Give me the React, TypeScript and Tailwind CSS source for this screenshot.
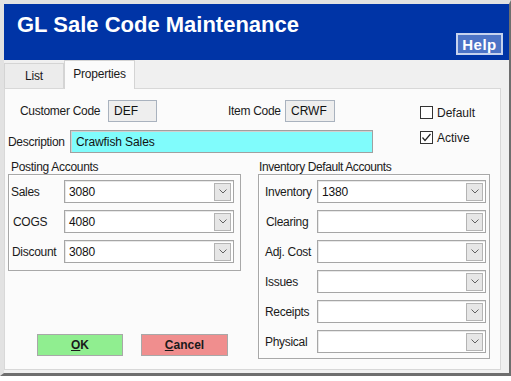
import React from "react";

const font = { fontFamily: '"Liberation Sans", Arial, sans-serif' };

function Chevron() {
  return (
    <svg width="8" height="5" viewBox="0 0 8 5">
      <polyline points="0.5,0.5 4,4 7.5,0.5" fill="none" stroke="#606060" strokeWidth="1" />
    </svg>
  );
}

function Combo({ value, w }: { value: string; w: string }) {
  return (
    <div className={`${w} h-[23px] border border-[#a6a6a6] bg-white flex items-center shadow-[inset_1px_1px_0_#e8e8e8]`}>
      <span className="flex-1 pl-[4px] text-[12px] tracking-[-0.2px] text-[#111]">{value}</span>
      <div className="w-[17px] h-[18px] mr-[2px] border border-[#b4b4b4] bg-[#e6e6e6] flex items-center justify-center">
        <Chevron />
      </div>
    </div>
  );
}

function Row({ label, value, lw, cw }: { label: string; value: string; lw: string; cw: string }) {
  return (
    <div className="flex items-center h-[23px]">
      <span className={`${lw} text-[12px] tracking-[-0.3px] text-[#1a1a1a]`}>{label}</span>
      <Combo value={value} w={cw} />
    </div>
  );
}

export default function App() {
  return (
    <div className="w-[511px] h-[381px] bg-white" style={font}>
      <div className="w-[511px] h-[376px] border-t-[4px] border-l-[4px] border-[#e2e2e2] border-r-[2px] border-r-[#6e6e6e] border-b-[3px] border-b-[#6e6e6e] bg-[#f0f0f0]">
        {/* Header */}
        <div className="h-[56px] bg-[#0034a6] relative flex">
          <div className="pl-[13px] pt-[10px] text-white font-bold text-[22px] leading-[22px]">
            GL Sale Code Maintenance
          </div>
          <div className="ml-auto mt-[29px] mr-[6px] w-[47px] h-[22px] border-2 border-[#c6d2ee] bg-[#4c73c6] flex items-center justify-center text-white font-bold text-[15px] tracking-[0.5px] leading-none">
            Help
          </div>
        </div>
        {/* Tabs */}
        <div className="h-[28px] flex items-end">
          <div className="w-[60px] h-[25px] bg-[#ececec] border border-b-0 border-[#d4d4d4] flex items-center justify-center text-[12px] tracking-[-0.2px] text-[#1a1a1a]">
            List
          </div>
          <div className="relative z-10 -mb-px w-[71px] h-[29px] bg-[#fbfbfb] border border-b-0 border-[#d4d4d4] flex items-center justify-center pb-[3px] text-[12px] tracking-[-0.2px] text-[#1a1a1a]">
            Properties
          </div>
        </div>
        {/* Panel */}
        <div className="w-[497px] h-[282px] border border-[#d8d8d8] bg-[#fbfbfb]">
          <div className="flex">
            <div className="w-[415px] flex flex-col">
              <div className="flex items-center h-[22px] mt-[11px]">
                <span className="ml-[15px] w-[88px] text-[12px] tracking-[-0.3px] text-[#1a1a1a]">Customer Code</span>
                <div className="w-[49px] h-[22px] border border-[#a9b2be] bg-[#eeeeee] flex items-center pl-[5px] text-[12px] text-[#111]">DEF</div>
                <span className="ml-[71px] w-[57px] text-[12px] tracking-[-0.3px] text-[#1a1a1a]">Item Code</span>
                <div className="w-[50px] h-[22px] border border-[#a9b2be] bg-[#eeeeee] flex items-center pl-[5px] text-[12px] text-[#111]">CRWF</div>
              </div>
              <div className="flex items-center h-[23px] mt-[8px]">
                <span className="ml-[3px] w-[62px] text-[12px] tracking-[-0.3px] text-[#1a1a1a]">Description</span>
                <div className="w-[303px] h-[23px] border border-[#a0a0a0] bg-[#80fcfc] flex items-center pl-[5px] text-[12px] tracking-[-0.1px] text-[#111] shadow-[inset_1px_1px_0_#d0d0d0]">
                  Crawfish Sales
                </div>
              </div>
            </div>
            <div className="flex flex-col mt-[17px] gap-[12px]">
              <div className="flex items-center h-[13px]">
                <div className="w-[13px] h-[13px] border border-[#333] bg-white" />
                <span className="ml-[4px] text-[12px] text-[#1a1a1a]">Default</span>
              </div>
              <div className="flex items-center h-[13px]">
                <div className="w-[13px] h-[13px] border border-[#333] bg-white flex items-center justify-center">
                  <svg width="11" height="11" viewBox="0 0 11 11">
                    <polyline points="1.5,5.5 4,8.5 9.5,2" fill="none" stroke="#222" strokeWidth="1.2" />
                  </svg>
                </div>
                <span className="ml-[4px] text-[12px] text-[#1a1a1a]">Active</span>
              </div>
            </div>
          </div>
          {/* Groups */}
          <div className="flex mt-[7px]">
            <div className="ml-[3px] w-[233px] flex flex-col">
              <div className="h-[14px] pl-[3px] text-[12px] leading-[14px] tracking-[-0.3px] text-[#1a1a1a]">Posting Accounts</div>
              <div className="h-[97px] border border-[#a8a8a8] shadow-[inset_1px_1px_0_#ffffff] pt-[5px] pl-[2px] flex flex-col gap-[7px]">
                <Row label="Sales" value="3080" lw="w-[53px]" cw="w-[170px]" />
                <Row label="COGS" value="4080" lw="w-[53px] pl-[2px]" cw="w-[170px]" />
                <Row label="Discount" value="3080" lw="w-[53px] pl-[1px]" cw="w-[170px]" />
              </div>
              <div className="flex mt-[63px] ml-[29px]">
                <div className="w-[86px] h-[22px] bg-[#90ee90] border border-[#a8a8a8] flex items-center justify-center text-[12px] font-bold text-[#1a1a1a]">
                  <span><span className="underline">O</span>K</span>
                </div>
                <div className="ml-[18px] w-[87px] h-[22px] bg-[#f08e8e] border border-[#a8a8a8] flex items-center justify-center text-[12px] font-bold text-[#1a1a1a]">
                  <span><span className="underline">C</span>ancel</span>
                </div>
              </div>
            </div>
            <div className="ml-[17px] w-[232px] flex flex-col">
              <div className="h-[14px] pl-[1px] text-[12px] leading-[14px] tracking-[-0.4px] text-[#1a1a1a]">Inventory Default Accounts</div>
              <div className="h-[185px] border border-[#a8a8a8] shadow-[inset_1px_1px_0_#ffffff] pt-[5px] pl-[6px] flex flex-col gap-[7px]">
                <Row label="Inventory" value="1380" lw="w-[52px]" cw="w-[169px]" />
                <Row label="Clearing" value="" lw="w-[52px] pl-[1px]" cw="w-[169px]" />
                <Row label="Adj. Cost" value="" lw="w-[52px]" cw="w-[169px]" />
                <Row label="Issues" value="" lw="w-[52px]" cw="w-[169px]" />
                <Row label="Receipts" value="" lw="w-[52px]" cw="w-[169px]" />
                <Row label="Physical" value="" lw="w-[52px]" cw="w-[169px]" />
              </div>
            </div>
          </div>
        </div>
      </div>
    </div>
  );
}
